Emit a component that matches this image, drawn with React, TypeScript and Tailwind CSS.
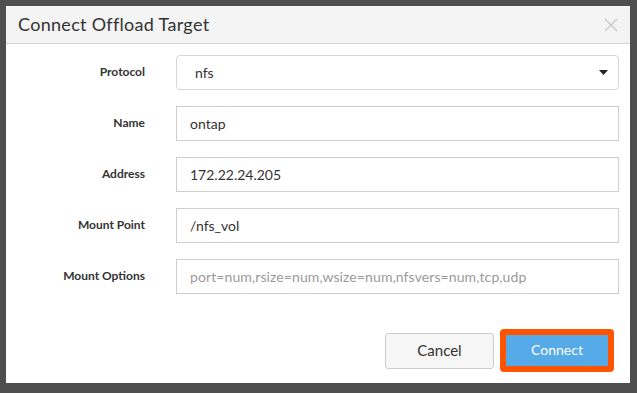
import React from "react";

const fields = [
  { label: "Name", value: "ontap" },
  { label: "Address", value: "172.22.24.205" },
  { label: "Mount Point", value: "/nfs_vol" },
];

function Row({ label, children }: { label: string; children: React.ReactNode }) {
  return (
    <div className="flex items-center h-[35px]">
      <div className="w-[139px] text-right text-[12px] font-bold text-[#333] -mt-[2px]">{label}</div>
      <div className="ml-[31px] w-[443px] h-full">{children}</div>
    </div>
  );
}

export default function App() {
  return (
    <div
      className="w-[637px] h-[393px] bg-[#4e4e4e] pt-[6px] pl-[6px] overflow-hidden"
      style={{ fontFamily: "Lato, 'Open Sans', sans-serif" }}
    >
      <div className="w-[624px] h-[377px] bg-white flex flex-col">
        {/* Header */}
        <div className="h-[38px] bg-[#f4f4f4] border-b border-[#d4d4d4] flex items-center justify-between pl-[12px] pr-[12px]">
          <span className="text-[18px] tracking-[0.3px] text-[#333]">Connect Offload Target</span>
          <svg width="14" height="14" viewBox="0 0 14 14">
            <path d="M1 1 L13 13 M13 1 L1 13" stroke="#c8c8c8" strokeWidth="1.3" />
          </svg>
        </div>

        {/* Form */}
        <div className="flex flex-col gap-[16px] pt-[11px]">
          <Row label="Protocol">
            <div className="h-full border border-[#d6d6d6] rounded-[4px] flex items-center justify-between pl-[18px] pr-[10px] text-[14px] text-[#333]">
              <span>nfs</span>
              <svg width="9" height="5" viewBox="0 0 9 5">
                <path d="M0 0 H9 L4.5 5 Z" fill="#222" />
              </svg>
            </div>
          </Row>
          {fields.map((f) => (
            <Row key={f.label} label={f.label}>
              <div className="h-full border border-[#cfcfcf] flex items-center pl-[13px] text-[14px] text-[#333]">
                {f.value}
              </div>
            </Row>
          ))}
          <Row label="Mount Options">
            <div className="h-full border border-[#cfcfcf] flex items-center pl-[13px] text-[14px] tracking-[0.1px] text-[#9a9a9a]">
              port=num,rsize=num,wsize=num,nfsvers=num,tcp,udp
            </div>
          </Row>
        </div>

        {/* Footer */}
        <div className="flex justify-end items-center gap-[6px] mt-[35px] pr-[16px]">
          <button className="w-[109px] h-[36px] bg-[#f6f6f6] border border-[#cccccc] rounded-[3px] text-[15px] text-[#333]">
            Cancel
          </button>
          <div className="border-[6px] border-[#ff5500] rounded-[4px]">
            <button className="block w-[102px] h-[31px] bg-[#56aae8] text-[14px] text-white pb-[2px]">
              Connect
            </button>
          </div>
        </div>
      </div>
    </div>
  );
}
